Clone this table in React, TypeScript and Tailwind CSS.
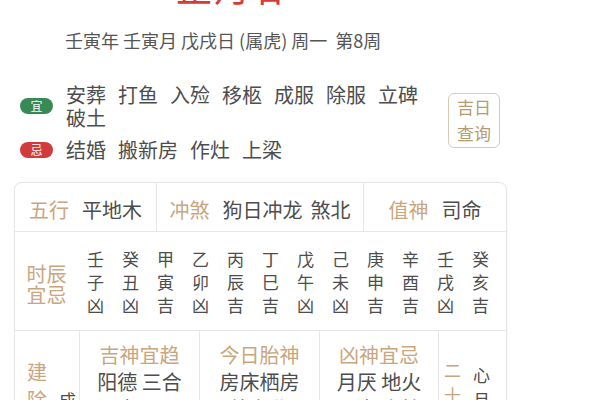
const yi = ["安葬", "打鱼", "入殓", "移柩", "成服", "除服", "立碑", "破土"];
const ji = ["结婚", "搬新房", "作灶", "上梁"];

const hours = [
  ["壬", "子", "凶"],
  ["癸", "丑", "凶"],
  ["甲", "寅", "吉"],
  ["乙", "卯", "凶"],
  ["丙", "辰", "吉"],
  ["丁", "巳", "吉"],
  ["戊", "午", "凶"],
  ["己", "未", "凶"],
  ["庚", "申", "吉"],
  ["辛", "酉", "吉"],
  ["壬", "戌", "凶"],
  ["癸", "亥", "吉"],
];

const gods = [
  { title: "吉神宜趋", items: ["阳德 三合", "天喜 天医"] },
  { title: "今日胎神", items: ["房床栖房", "外东北"] },
  { title: "凶神宜忌", items: ["月厌 地火", "四击 大煞"] },
];

function Vertical({ text, className }: { text: string; className: string }) {
  return (
    <div className={`flex flex-col ${className}`}>
      {text.split("").map((c, i) => (
        <span key={i}>{c}</span>
      ))}
    </div>
  );
}

export default function App() {
  return (
    <div
      className="w-[600px] h-[400px] overflow-hidden bg-white text-[#4d4d4d]"
      style={{ fontFamily: '"Noto Sans CJK SC", "Noto Sans", sans-serif' }}
    >
      {/* Big red date, cut off at the top */}
      <div className="h-[8px] overflow-hidden flex items-end pl-[176px]">
        <div className="text-[36px] leading-[44px] text-[#d83a3a] tracking-[2px] shrink-0">正月廿一</div>
      </div>

      <div className="mt-[20px] pl-[65px] text-[18px] leading-[24px] text-[#555]">
        壬寅年 壬寅月 戊戌日 (属虎) 周一&nbsp;&nbsp;第8周
      </div>

      {/* 宜 / 忌 */}
      <div className="mt-[31px] flex items-center pl-[20px]">
        <div className="w-[420px] flex flex-col gap-[9px]">
          <div className="flex items-center">
            <span className="w-[33px] h-[16px] rounded-full bg-[#378a55] text-white text-[12px] leading-[16px] text-center shrink-0">
              宜
            </span>
            <div className="ml-[13px] w-[374px] flex flex-wrap gap-x-3 text-[20px] leading-[23px]">
              {yi.map((w) => (
                <span key={w}>{w}</span>
              ))}
            </div>
          </div>
          <div className="flex items-center">
            <span className="w-[33px] h-[16px] rounded-full bg-[#d23b3b] text-white text-[12px] leading-[16px] text-center shrink-0">
              忌
            </span>
            <div className="ml-[13px] flex gap-x-3 text-[20px] leading-[23px]">
              {ji.map((w) => (
                <span key={w}>{w}</span>
              ))}
            </div>
          </div>
        </div>
        <div className="ml-[8px] -mt-[4px] w-[52px] h-[55px] border border-[#d9cbb3] rounded-md flex flex-col items-center justify-center text-[17px] leading-[26px] text-[#b59a72]">
          <span>吉日</span>
          <span>查询</span>
        </div>
      </div>

      {/* Table */}
      <div className="mt-[21px] ml-[14px] w-[493px] border border-[#e6e6e6] rounded-t-lg shadow-[0_0_3px_rgba(0,0,0,0.05)] text-[20px]">
        <div className="grid grid-cols-[142px_207px_1fr] h-[49px] border-b border-[#e6e6e6]">
          <div className="flex items-center justify-center gap-[13px] border-r border-[#e6e6e6] pt-[6px]">
            <span className="text-[#c9a67e]">五行</span>
            <span>平地木</span>
          </div>
          <div className="flex items-center justify-center gap-[13px] border-r border-[#e6e6e6] pt-[6px]">
            <span className="text-[#c9a67e]">冲煞</span>
            <span>
              狗日冲龙<span className="ml-[8px]">煞北</span>
            </span>
          </div>
          <div className="flex items-center justify-center gap-[13px] pt-[6px]">
            <span className="text-[#c9a67e]">值神</span>
            <span>司命</span>
          </div>
        </div>

        <div className="flex h-[99px] border-b border-[#e6e6e6]">
          <div className="w-[63px] flex flex-col items-center justify-center pt-[6px] text-[#c9a67e] leading-[21px]">
            <span>时辰</span>
            <span>宜忌</span>
          </div>
          <div className="grid grid-cols-12 w-[420px] items-center">
            {hours.map((h, i) => (
              <div key={i} className="flex flex-col items-center text-[17px] leading-[23px]">
                {h.map((c, j) => (
                  <span key={j}>{c}</span>
                ))}
              </div>
            ))}
          </div>
        </div>

        <div className="grid grid-cols-[65px_120px_120px_119px_1fr] h-[110px]">
          <div className="flex border-r border-[#e6e6e6] pl-[12px] gap-[12px]">
            <Vertical text="建除" className="pt-[27px] leading-[28px] text-[#c9a67e]" />
            <Vertical text="成日" className="pt-[57px] text-[17px] leading-[24px]" />
          </div>
          {gods.map((g) => (
            <div key={g.title} className="flex flex-col items-center pt-[10px] leading-[27px] border-r border-[#e6e6e6]">
              <span className="text-[#c9a67e]">{g.title}</span>
              {g.items.map((it) => (
                <span key={it}>{it}</span>
              ))}
            </div>
          ))}
          <div className="flex pl-[5px] gap-[12px] text-[17px] leading-[25px]">
            <Vertical text="二十八宿" className="pt-[26px] text-[#c9a67e]" />
            <Vertical text="心月狐" className="pt-[31px]" />
          </div>
        </div>
      </div>
    </div>
  );
}
